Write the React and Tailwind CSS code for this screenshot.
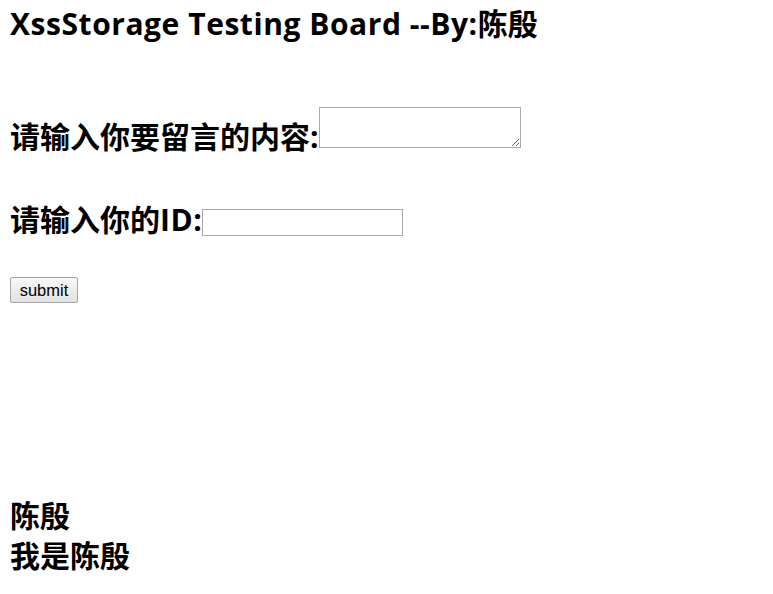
import React from 'react';

const heading = "font-['Open_Sans','Noto_Sans_CJK_SC',sans-serif] text-[30px] font-bold leading-[38px] text-black";

export default function App() {
    return (
        <div className="min-h-[594px] w-[773px] bg-white pl-[10px]">
            {/* title */}
            <div className={`${heading} pt-[5px]`}>
                <span className="tracking-[0.55px]">XssStorage Testing Board --By:</span>陈殷
            </div>

            {/* message */}
            <div className="mt-[64px] flex items-end">
                <span className={heading}>请输入你要留言的内容:</span>
                <textarea className="mb-[8px] h-[41px] w-[202px] border border-[#a9a9a9] bg-white" />
            </div>

            {/* id */}
            <div className="mt-[45px] flex items-end">
                <span className={heading}>
                    请输入你的<span className="tracking-[0.5px]">ID:</span>
                </span>
                <input type="text" className="mb-[3px] h-[27px] w-[201px] border border-[#a9a9a9] bg-white" />
            </div>

            <button className="mt-[38px] flex h-[26px] w-[68px] items-center justify-center rounded-[2px] border border-[#a6a6a6] bg-gradient-to-b from-[#f8f8f8] to-[#e1e1e1] font-['Liberation_Sans',sans-serif] text-[16.5px] text-black">
                submit
            </button>

            {/* messages */}
            <div className="mt-[194px]">
                <div className={heading}>陈殷</div>
                <div className={`${heading} mt-[2px]`}>我是陈殷</div>
            </div>
        </div>
    );
}
